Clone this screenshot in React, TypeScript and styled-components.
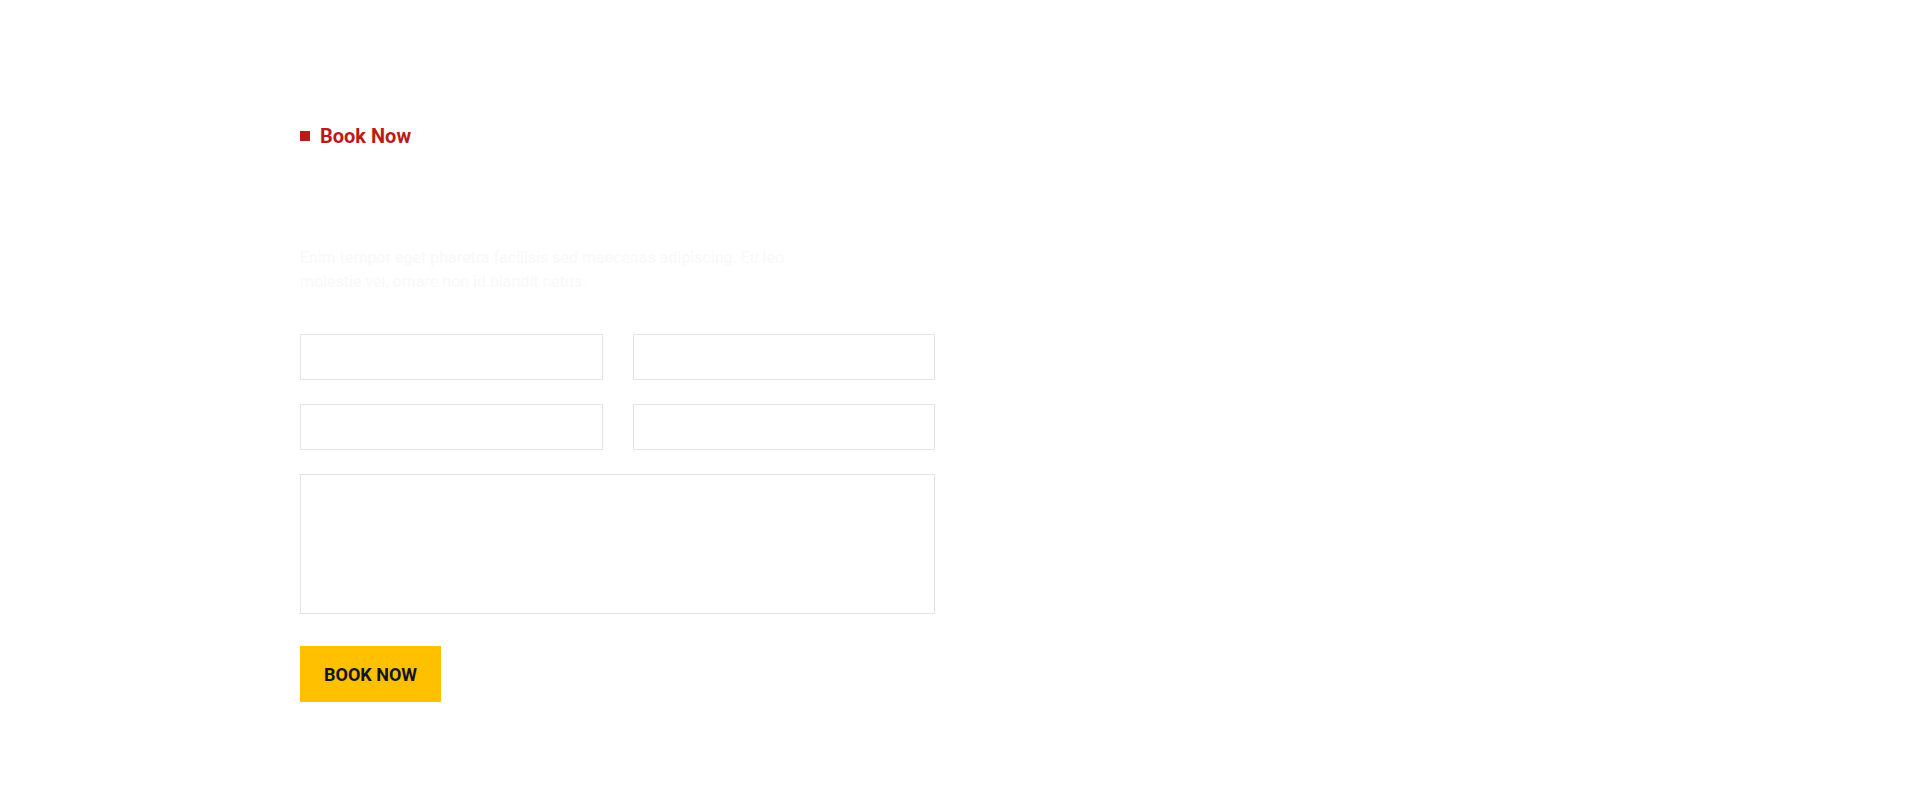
import React from 'react'
import styled, { createGlobalStyle } from 'styled-components'

const GlobalStyle = createGlobalStyle`
  * {
    box-sizing: border-box;
  }
  body {
    margin: 0;
    background-color: #ffffff;
    font-family: Roboto, 'Liberation Sans', Arial, sans-serif;
  }
`

const Section = styled.section`
  width: 100%;
  min-height: 788px;
  padding: 121px 0 0 300px;
`

const Eyebrow = styled.div`
  display: flex;
  align-items: center;
  gap: 10px;
  height: 30px;
  color: #bb1b17;
  font-size: 20px;
  font-weight: 700;
`

const Square = styled.span`
  width: 10px;
  height: 10px;
  background-color: #bb1b17;
`

const Title = styled.h2`
  margin: 0;
  height: 95px;
  color: #ffffff;
  font-size: 40px;
  font-weight: 700;
  line-height: 95px;
`

const Intro = styled.p`
  margin: 0 0 40px;
  max-width: 500px;
  color: #f9f9f9;
  font-size: 16px;
  line-height: 24px;
`

const Form = styled.form`
  display: grid;
  grid-template-columns: 1fr 1fr;
  column-gap: 30px;
  row-gap: 24px;
  width: 635px;
`

const Field = styled.input`
  height: 46px;
  border: 1px solid #e4e4e4;
  background: #ffffff;
  padding: 0 16px;
  font: inherit;
  outline: none;
`

const Message = styled.textarea`
  grid-column: 1 / -1;
  height: 140px;
  border: 1px solid #e4e4e4;
  background: #ffffff;
  padding: 12px 16px;
  font: inherit;
  resize: none;
  outline: none;
`

const Submit = styled.button`
  justify-self: start;
  margin-top: 8px;
  height: 56px;
  padding: 0 24px;
  border: none;
  background-color: #ffc000;
  color: #111522;
  font-family: Roboto, 'Liberation Sans', Arial, sans-serif;
  font-size: 18px;
  font-weight: 700;
  text-transform: uppercase;
  cursor: pointer;
`

const App = () => {
  return (
    <>
      <GlobalStyle />
      <Section>
        <Eyebrow>
          <Square />
          Book Now
        </Eyebrow>
        <Title>Make a Reservation</Title>
        <Intro>
          Enim tempor eget pharetra facilisis sed maecenas adipiscing. Eu leo
          molestie vel, ornare non id blandit netus.
        </Intro>
        <Form onSubmit={(e) => e.preventDefault()}>
          <Field type='text' />
          <Field type='email' />
          <Field type='text' />
          <Field type='text' />
          <Message />
          <Submit type='submit'>Book Now</Submit>
        </Form>
      </Section>
    </>
  )
}

export default App
